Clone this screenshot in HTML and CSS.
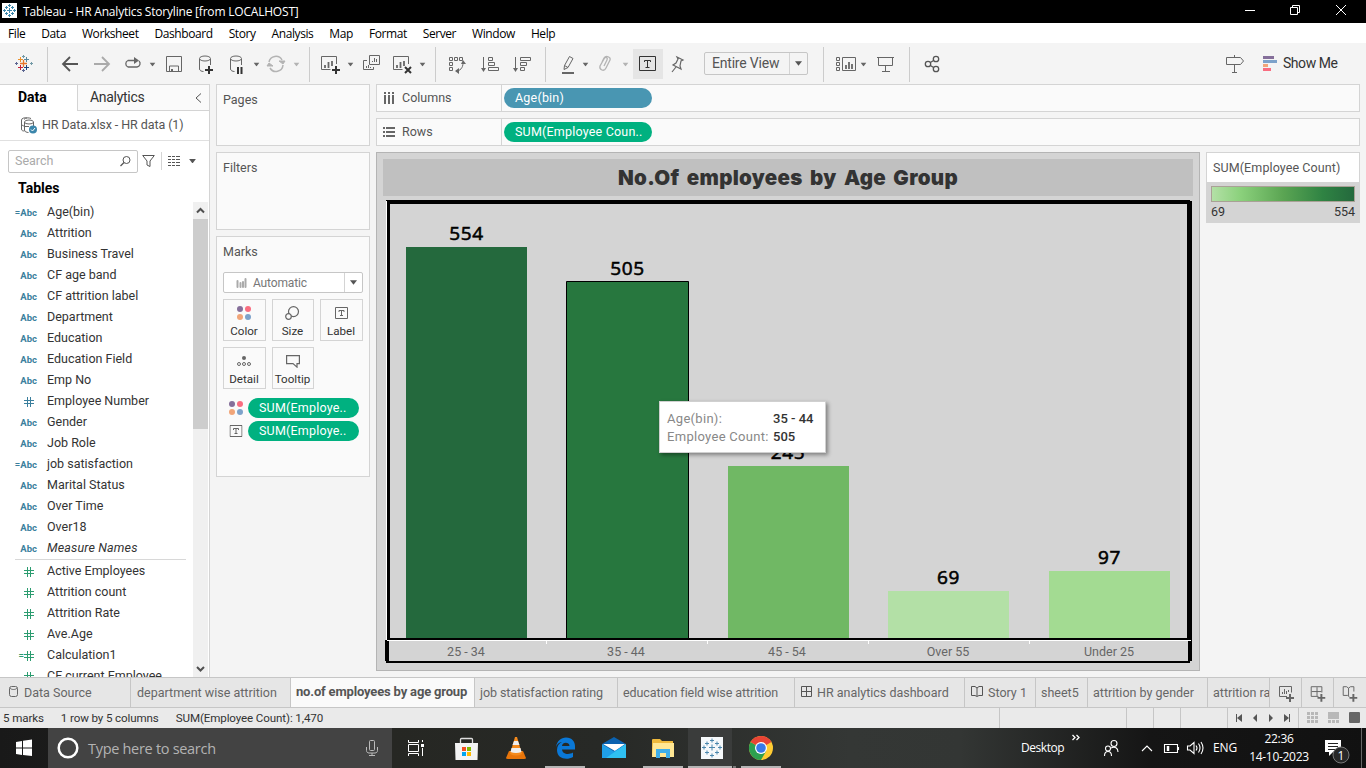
FILE: index.html
```html
<!DOCTYPE html>
<html lang="en">
<head>
<meta charset="utf-8">
<title>Tableau - HR Analytics Storyline</title>
<link rel="stylesheet" href="styles.css">
</head>
<body>
<svg class="defs" width="0" height="0">
  <symbol id="caret" viewBox="0 0 6 4"><path d="M0 0h6L3 4z" fill="currentColor"/></symbol>
  <symbol id="hash" viewBox="0 0 10 10"><path d="M0 3.500h10M0 6.500h10M3.500 0v10M6.500 0v10" stroke="currentColor" fill="none"/></symbol>
  <symbol id="tbox" viewBox="0 0 13 12"><path d="M.5.500h12v11H.5zM4 5V3.500h5V5M6.500 3.500v5M5 8.500h3" stroke="#666" fill="none"/></symbol>
  <symbol id="dots" viewBox="0 0 14 14"><circle cx="3" cy="3" r="3" fill="#856f9a"/><circle cx="11" cy="3" r="3" fill="#f96d80"/><circle cx="3" cy="11" r="3" fill="#f1a579"/><circle cx="11" cy="11" r="3" fill="#7da2ca"/></symbol>
</svg>

<header class="titlebar">
  <svg class="app-icon" width="15" height="15" viewBox="0 0 15 15"><rect width="15" height="15" fill="#fff"/><path d="M5 7.500h5M7.500 5v5M6 2.500h3M7.500 1v3M6 12.500h3M7.500 11v3M1 7.500h3M2.500 6v3M11 7.500h3M12.500 6v3M3 4.500h3M4.500 3v3M9 4.500h3M10.500 3v3M3 10.500h3M4.500 9v3M9 10.500h3M10.500 9v3" stroke="#3b86ab" fill="none"/></svg>
  <span class="title">Tableau - HR Analytics Storyline [from LOCALHOST]</span>
  <svg width="136" height="23" viewBox="1230 0 136 23" fill="none" stroke="#fff"><path d="M1245 10.500h10M1290.500 7.500h7v7h-7zM1292.500 7V5.500h7v7H1298M1336 5l10 10M1346 5l-10 10"/></svg>
</header>
<nav class="menu"><span>File</span><span>Data</span><span>Worksheet</span><span>Dashboard</span><span>Story</span><span>Analysis</span><span>Map</span><span>Format</span><span>Server</span><span>Window</span><span>Help</span></nav>

<div class="toolbar">
  <svg width="48" height="41" viewBox="0 43 48 41" fill="none"><path d="M20 63.500h7M23.500 60v7" stroke="#e8762c" stroke-width="1.300"/><path d="M18 59.500h5M20.500 57v5" stroke="#eb912c"/><path d="M24 59.500h5M26.500 57v5" stroke="#59879b"/><path d="M18 67.500h5M20.500 65v5" stroke="#c72035"/><path d="M24 67.500h5M26.500 65v5" stroke="#1f447e"/><path d="M22 56.500h3M23.500 55v3M30 63.500h3M31.500 62v3" stroke="#7199a6"/><path d="M22 70.500h3M23.500 69v3M15 63.500h3M16.500 62v3" stroke="#5b6591"/><path d="M47.500 47v35" stroke="#ccc"/></svg>
  <svg width="38" height="41" viewBox="48 43 38 41" fill="none" stroke="#555" stroke-width="1.800"><path d="M78 64H63M70 57l-7 7 7 7"/></svg>
  <svg width="32" height="41" viewBox="86 43 32 41" fill="none" stroke="#aaa" stroke-width="1.800"><path d="M94 64h15M102 57l7 7-7 7"/></svg>
  <svg width="42" height="41" viewBox="118 43 42 41"><path d="M131 60.500h-3a3.500 3.500 0 0 0 0 6.500h9a3.500 3.500 0 0 0 2-6M130 60.500h6" fill="none" stroke="#666" stroke-width="1.300"/><path d="M134 57l5 3.500-5 3.500z" fill="#666"/><use href="#caret" x="149.500" y="62.500" width="6" height="4" color="#666"/></svg>
  <svg width="30" height="41" viewBox="160 43 30 41" fill="none" stroke="#666"><path d="M166.500 56.500h15v15h-15zM169.500 71v-5h9v5"/><path d="M172 69v2" stroke-width="2"/></svg>
  <svg width="32" height="41" viewBox="190 43 32 41" fill="none" stroke="#666"><path d="M199.500 59v10c0 1.500 2 2.500 4 2.500M210.500 59v6"/><ellipse cx="205" cy="58.500" rx="5.500" ry="2.500"/><path d="M205 70h8M209 66v8" stroke="#333" stroke-width="2"/></svg>
  <svg width="40" height="41" viewBox="222 43 40 41" fill="none" stroke="#666"><path d="M230.500 59v10c0 1.500 2 2.500 4 2.500M241.500 59v6"/><ellipse cx="236" cy="58.500" rx="5.500" ry="2.500"/><path d="M238 67v7M241.500 67v7" stroke="#333" stroke-width="2"/><use href="#caret" x="253.500" y="62.500" width="6" height="4" color="#666" stroke="none"/></svg>
  <svg width="47" height="41" viewBox="262 43 47 41" fill="none" stroke="#b3b3b3"><path d="M269 62a7 7 0 0 1 13-2M283 65a7 7 0 0 1-13 3" stroke-width="1.500"/><path d="M279 61h6l-2 3zM267 66h6l-4-3z" fill="#b3b3b3"/><use href="#caret" x="293.500" y="62.500" width="6" height="4" color="#b3b3b3" stroke="none"/></svg>
  <svg width="48" height="41" viewBox="309 43 48 41" fill="none" stroke="#666"><path d="M309.500 47v35" stroke="#ccc"/><path d="M336.500 64v-7.500h-15v13h9"/><path d="M325 68v-3M328.500 68v-6M332 66v-5" stroke-width="1.800"/><path d="M332 70h8M336 66v8" stroke="#333" stroke-width="2"/><use href="#caret" x="347.500" y="62.500" width="6" height="4" color="#666" stroke="none"/></svg>
  <svg width="31" height="41" viewBox="357 43 31 41" fill="none" stroke="#666"><path d="M369.500 55.500h10v9h-10zM367 60.500h-3.500v9h10V67M372.500 62v-1M374.500 62v-4M376.500 62v-3M366.500 68v-2M368.500 68v-3M370.500 68v-1"/></svg>
  <svg width="47" height="41" viewBox="388 43 47 41" fill="none" stroke="#666"><path d="M408.500 64v-7.500h-15v13h9"/><path d="M397 68v-3M400.500 68v-6M404 66v-5" stroke-width="1.800"/><path d="M405 67l6 6M411 67l-6 6" stroke="#333" stroke-width="2"/><use href="#caret" x="419.500" y="62.500" width="6" height="4" color="#666" stroke="none"/></svg>
  <svg width="39" height="41" viewBox="435 43 39 41" fill="none" stroke="#666"><path d="M435.500 47v35" stroke="#ccc"/><path d="M449.500 57.500h3v3h-3zM454.500 57.500h3v3h-3zM459.500 57.500h3v3h-3zM449.500 62.500h3v3h-3zM449.500 67.500h3v3h-3zM456 71c4 0 7-3 7-8"/><path d="M461 64l2-4 3 4zM459 68l-4 3 4 3z" fill="#666" stroke="none"/></svg>
  <svg width="34" height="41" viewBox="474 43 34 41" fill="none" stroke="#666"><path d="M483.500 57v13M488.500 57.500h4v3h-4zM488.500 62.500h6v3h-6zM488.500 67.500h10v3h-10z"/><path d="M481 68h5l-2.500 4z" fill="#666" stroke="none"/></svg>
  <svg width="37" height="41" viewBox="508 43 37 41" fill="none" stroke="#666"><path d="M515.500 57v13M520.500 57.500h10v3h-10zM520.500 62.500h6v3h-6zM520.500 67.500h4v3h-4z"/><path d="M513 68h5l-2.500 4z" fill="#666" stroke="none"/></svg>
  <svg width="47" height="41" viewBox="545 43 47 41" fill="none" stroke="#666"><path d="M545.500 47v35" stroke="#ccc"/><path d="M564.500 65.500l5-9 3.500 2-5 9-4 2zM564.500 65.500l3.500 2"/><path d="M562 73h12" stroke-width="2"/><use href="#caret" x="582.500" y="62.500" width="6" height="4" color="#666" stroke="none"/></svg>
  <svg width="41" height="41" viewBox="592 43 41 41" fill="none" stroke="#b3b3b3"><path d="M602 62l2-4c2-3 7-1 6 2l-4 8c-2 4-7 2-6-2l4-7c2-3 4-1 3 1l-3 6" stroke-width="1.300"/><use href="#caret" x="622.500" y="62.500" width="6" height="4" color="#b3b3b3" stroke="none"/></svg>
  <svg width="30" height="41" viewBox="633 43 30 41" fill="none" stroke="#333"><path d="M633 49h30v30h-30z" fill="#e5e5e5" stroke="none"/><path d="M639.500 56.500h16v14h-16zM644.500 62v-1.500h6V62M647.500 60.500v7M645.500 67.500h4"/></svg>
  <svg width="41" height="41" viewBox="663 43 41 41" fill="none" stroke="#666" stroke-width="1.200"><path d="M677 57l6 3-2 1-1 5 1 3-8-4 3-2 2-4zM676 67l-4 5"/></svg>
  <div class="fit"><span>Entire View</span><i><svg width="7" height="5"><use href="#caret" width="7" height="5"/></svg></i></div>
  <svg width="55" height="41" viewBox="815 43 55 41" fill="none" stroke="#666"><path d="M823.500 47v35" stroke="#ccc"/><path d="M836.500 57.500h3v3h-3zM836.500 62.500h3v3h-3zM836.500 67.500h3v3h-3zM842.500 57.500h13v13h-13z"/><path d="M846 69v-4M849 69v-7M852 69v-5" stroke-width="1.800"/><use href="#caret" x="860.500" y="62.500" width="6" height="4" color="#666" stroke="none"/></svg>
  <svg width="39" height="41" viewBox="870 43 39 41" fill="none" stroke="#666"><path d="M877 57.500h17M878.500 57.500v8h14v-8M885.500 66v5M882 71.500h8"/></svg>
  <svg width="50" height="41" viewBox="909 43 50 41" fill="none" stroke="#555" stroke-width="1.300"><path d="M909.500 47v35" stroke="#ccc" stroke-width="1"/><circle cx="928" cy="64" r="2.700"/><circle cx="936" cy="59" r="2.700"/><circle cx="936" cy="69" r="2.700"/><path d="M930.400 62.500l3.200-2M930.400 65.500l3.200 2"/></svg>
  <svg class="push" width="30" height="41" viewBox="1222 43 30 41" fill="none" stroke="#666"><path d="M1226.500 57.500h14l3 3.500-3 3.500h-14zM1234.500 55v2M1234.500 65v7M1232 72.500h5"/></svg>
  <svg width="15" height="41" viewBox="1262 43 15 41"><path d="M1263 56h11v3h-11z" fill="#856f9a"/><path d="M1263 60h14v3h-14z" fill="#7da2ca"/><path d="M1263 64h5v3h-5z" fill="#f1a579"/><path d="M1263 68h8v3h-8z" fill="#f96d80"/></svg>
  <span class="showme">Show Me</span>
</div>

<main class="work">
  <aside class="data">
    <div class="dtabs"><b>Data</b><div>Analytics<svg width="7" height="10" viewBox="0 0 7 10"><path d="M6 .5L1 5l5 4.500" fill="none" stroke="#555"/></svg></div></div>
    <div class="source"><svg width="18" height="17" viewBox="0 0 18 17" fill="none" stroke="#666"><path d="M4 2.500C5 .5 9 .5 11 1.500M1.500 3v9c0 2 2 2 3 2M1.500 3C1.500 1 5 .5 7 1M1.500 7c0 1.500 2 2 3 2M4.500 5v8c0 1.500 2 2.500 4 2.500M13.500 5v4"/><ellipse cx="9" cy="5" rx="4.500" ry="2"/><path d="M5 9.500h4"/><circle cx="13" cy="12.500" r="4" fill="#3b86ab" stroke="none"/><path d="M11 12.500l1.500 1.500 2.500-3" stroke="#fff"/></svg><span>HR Data.xlsx - HR data (1)</span></div>
    <div class="find">
      <div class="searchbox"><span>Search</span><svg width="11" height="11" viewBox="0 0 11 11" fill="none" stroke="#555"><circle cx="6.500" cy="4" r="3.500"/><path d="M4 6.500L.5 10" stroke-width="1.300"/></svg></div>
      <svg width="13" height="12" viewBox="0 0 13 12" fill="none" stroke="#555"><path d="M.7.500h11.600L8 6v5.500L5 10V6z"/></svg>
      <i class="bar"></i>
      <svg width="12" height="10" viewBox="0 0 12 10" stroke="#555"><path d="M0 .5h3M0 3.500h3M0 6.500h3M0 9.500h3M4 .5h3M4 3.500h3M4 6.500h3M4 9.500h3M8 .5h4M8 3.500h4M8 6.500h4M8 9.500h4"/></svg>
      <svg class="fc" width="7" height="4"><use href="#caret" width="7" height="4.500"/></svg>
    </div>
    <h2>Tables</h2>
    <div class="fields">
      <ul>
        <li><em>=Abc</em>Age(bin)</li><li><em>Abc</em>Attrition</li><li><em>Abc</em>Business Travel</li><li><em>Abc</em>CF age band</li><li><em>Abc</em>CF attrition label</li><li><em>Abc</em>Department</li><li><em>Abc</em>Education</li><li><em>Abc</em>Education Field</li><li><em>Abc</em>Emp No</li>
        <li><em><svg width="10" height="10"><use href="#hash"/></svg></em>Employee Number</li>
        <li><em>Abc</em>Gender</li><li><em>Abc</em>Job Role</li><li><em>=Abc</em>job satisfaction</li><li><em>Abc</em>Marital Status</li><li><em>Abc</em>Over Time</li><li><em>Abc</em>Over18</li><li class="ital"><em>Abc</em>Measure Names</li>
        <li class="rule"></li>
        <li class="m"><em><svg width="10" height="10"><use href="#hash"/></svg></em>Active Employees</li>
        <li class="m"><em><svg width="10" height="10"><use href="#hash"/></svg></em>Attrition count</li>
        <li class="m"><em><svg width="10" height="10"><use href="#hash"/></svg></em>Attrition Rate</li>
        <li class="m"><em><svg width="10" height="10"><use href="#hash"/></svg></em>Ave.Age</li>
        <li class="m"><em>=<svg width="10" height="10"><use href="#hash"/></svg></em>Calculation1</li>
        <li class="m"><em><svg width="10" height="10"><use href="#hash"/></svg></em>CF current Employee</li>
      </ul>
      <div class="scroll"><svg width="15" height="17" viewBox="0 0 15 17"><path d="M4 10.500L7.500 7l3.500 3.500" fill="none" stroke="#505050" stroke-width="2"/></svg><i></i><svg class="down" width="15" height="17" viewBox="0 0 15 17"><path d="M4 7l3.500 3.500L11 7" fill="none" stroke="#505050" stroke-width="2"/></svg></div>
    </div>
  </aside>

  <section class="cards">
    <div class="card pages">Pages</div>
    <div class="card filters">Filters</div>
    <div class="card marks">Marks
      <div class="mtype"><svg width="11" height="10" viewBox="0 0 11 10" stroke="#aaa" stroke-width="2" stroke-linecap="round"><path d="M1.500 9V3M4.500 9V5M7 9V4"/><path d="M9.500 9V1"/></svg><span>Automatic</span><i><svg width="7" height="5"><use href="#caret" width="7" height="5"/></svg></i></div>
      <div class="mbtns">
        <div><svg width="14" height="14"><use href="#dots"/></svg>Color</div>
        <div><svg width="15" height="14" viewBox="0 0 15 14" fill="none" stroke="#666" stroke-width="1.200"><circle cx="8.500" cy="5.600" r="5"/><circle cx="3.500" cy="10.500" r="2.800" fill="#fafafa"/></svg>Size</div>
        <div><svg width="13" height="14" viewBox="0 -1 13 14"><use href="#tbox" width="13" height="12"/></svg>Label</div>
        <div><svg width="14" height="14" viewBox="0 0 14 14" fill="none" stroke="#666"><circle cx="7" cy="4" r="2" fill="#666" stroke="none"/><circle cx="2" cy="10" r="1.500"/><circle cx="7" cy="10" r="1.500"/><circle cx="12" cy="10" r="1.500"/></svg>Detail</div>
        <div><svg width="14" height="14" viewBox="0 0 14 14" fill="none" stroke="#666" stroke-width="1.200"><path d="M.6 1.600h12.800v8H11v3.500l-4-3.500H.6z"/></svg>Tooltip</div>
      </div>
      <div class="mpill"><svg width="14" height="14"><use href="#dots"/></svg><span>SUM(Employe..</span></div>
      <div class="mpill"><svg width="13" height="12" viewBox="0 0 13 12"><use href="#tbox" width="13" height="12"/></svg><span>SUM(Employe..</span></div>
    </div>
  </section>

  <section class="view">
    <div class="shelf"><div><svg width="12" height="12" viewBox="0 0 12 12"><path d="M1 0h2v2H1zM5 0h2v2H5zM9 0h2v2H9zM1 3h2v9H1zM5 3h2v9H5zM9 3h2v9H9z" fill="#666"/></svg>Columns</div><span class="pill blue">Age(bin)</span></div>
    <div class="shelf"><div><svg width="12" height="12" viewBox="0 0 12 12"><path d="M0 1h2v2H0zM0 5h2v2H0zM0 9h2v2H0zM3 1h9v2H3zM3 5h9v2H3zM3 9h9v2H3z" fill="#666"/></svg>Rows</div><span class="pill">SUM(Employee Coun..</span></div>
    <div class="canvas">
      <div class="viz">
        <h1>No.Of employees by Age Group</h1>
        <svg class="chart" width="822" height="473" viewBox="377 197 822 473">
          <path d="M386 200h804v1h2v439H386z"/>
          <path d="M386.500 201v439" stroke="#fff"/>
          <path d="M390 204h797v434H390z" fill="#d4d4d4"/>
          <path d="M385 640h807v21h-2v2H386v-2h-1z"/>
          <path d="M389 640h799v21H389z" fill="#d4d4d4"/>
          <path d="M387 640.500h804M546.500 640v4M707.500 640v4M868.500 640v4M1029.500 640v4" stroke="#fff"/>
          <path d="M406 247h121v391H406z" fill="#24693d"/>
          <path d="M566.500 281.500h122v357h-122z" fill="#27773e" stroke="#000"/>
          <path d="M728 466h121v172H728z" fill="#70b864"/>
          <path d="M888 591h121v47H888z" fill="#b3e0a6"/>
          <path d="M1049 571h121v67h-121z" fill="#a3db92"/>
          <g class="vals"><text x="466.500" y="240">554</text><text x="627.500" y="275">505</text><text x="788" y="459">245</text><text x="948.500" y="584">69</text><text x="1109.500" y="564">97</text></g>
          <g class="axis"><text x="466" y="656">25 - 34</text><text x="626" y="656">35 - 44</text><text x="787" y="656">45 - 54</text><text x="948" y="656">Over 55</text><text x="1109" y="656">Under 25</text></g>
        </svg>
        <div class="tip"><span>Age(bin):</span><b>35 - 44</b><span>Employee Count:</span><b>505</b></div>
      </div>
      <div class="legend"><p>SUM(Employee Count)</p><div class="ramp"></div><div class="ends"><span>69</span><span>554</span></div></div>
    </div>
  </section>
</main>

<div class="sheets">
  <div class="s1"><svg width="10" height="12" viewBox="0 0 10 12" fill="none" stroke="#666"><rect x=".5" y=".5" width="8" height="10" rx="2"/><path d="M1 2c1 2 6 2 7 0"/></svg>Data Source</div>
  <div class="s2">department wise attrition</div>
  <div class="s3 on">no.of employees by age group</div>
  <div class="s4">job statisfaction rating</div>
  <div class="s5">education field wise attrition</div>
  <div class="s6"><svg width="11" height="11" viewBox="0 0 11 11"><path d="M.5.500h10v10H.5zM5.500 0v11M0 5.500h11" fill="none" stroke="#555"/></svg>HR analytics dashboard</div>
  <div class="s7"><svg width="12" height="11" viewBox="0 0 12 11"><path d="M.5.500H4L6 2 8 .5h3.500v9H8l-2 1-2-1H.5zM6 2v8" fill="none" stroke="#555"/></svg>Story 1</div>
  <div class="s8">sheet5</div>
  <div class="s9">attrition by gender</div>
  <div class="s10">attrition rate</div>
  <svg width="31" height="30" viewBox="1270 678 31 30" fill="none" stroke="#666"><path d="M1287 696.500h-7.500v-10h12v6M1282.500 694v-2M1284.500 694v-5M1286.500 694v-3M1288.500 692v-2"/><path d="M1286 698h8M1290 694v8" stroke-width="2"/></svg>
  <svg class="nl" width="32" height="30" viewBox="1302 678 32 30" fill="none" stroke="#666"><path d="M1319 696.500h-7.500v-10h11v6M1317.500 687v9M1312 691.500h10"/><path d="M1318 698h8M1322 694v8" stroke-width="2"/></svg>
  <svg class="nl" width="32" height="30" viewBox="1334 678 32 30" fill="none" stroke="#666"><path d="M1350 697l-2-1.500h-4.500v-9h3.500l2 1.500 2-1.500h3.500v5M1349 688v8"/><path d="M1350 698h8M1354 694v8" stroke-width="2"/></svg>
</div>

<div class="status"><span>5 marks</span><span>1 row by 5 columns</span><span>SUM(Employee Count): 1,470</span>
  <svg width="367" height="20" viewBox="999 708 367 20"><path d="M999.500 708v20M1126.500 708v20M1153.500 708v20M1180.500 708v20M1227.500 708v20M1298.500 708v20" stroke="#c6c6c6"/><path d="M1236 714h1v8h-1zM1242 714v8l-5-4zM1257 714v8l-4-4zM1269 714v8l4-4zM1284 714v8l5-4zM1289 714h1v8h-1z" fill="#555"/><path d="M1307 712h3v3h-3zM1311 712h3v3h-3zM1315 712h3v3h-3zM1307 716h3v3h-3zM1311 716h3v3h-3zM1315 716h3v3h-3zM1307 720h3v3h-3zM1311 720h3v3h-3zM1315 720h3v3h-3zM1328 712h11v7h-11zM1328 720h3v3h-3zM1332 720h3v3h-3zM1336 720h3v3h-3z" fill="#b8b8b8"/><rect x="1349" y="712" width="11" height="11" rx="1" fill="#666"/></svg>
</div>

<footer class="taskbar">
  <svg class="start" width="48" height="40" viewBox="0 728 48 40"><path d="M16 742l6-1v6.500h-6zM23 740.800l9-1.300v8h-9zM16 748.500h6v6.500l-6-1zM23 748.500h9v7.500l-9-1z" fill="#fff"/></svg>
  <div class="tsearch"><svg width="22" height="22" viewBox="0 0 22 22"><circle cx="11" cy="11" r="9.300" fill="none" stroke="#fff" stroke-width="2.500"/></svg><span>Type here to search</span><svg width="12" height="17" viewBox="0 0 12 17" fill="none" stroke="#bbb"><rect x="3.500" y=".5" width="5" height="10" rx="1"/><path d="M.5 7v3.500c0 1.500 1 2.500 2.500 2.500h6c1.500 0 2.500-1 2.500-2.500V7M6 13v3M3 15.500h6"/></svg></div>
  <svg width="51" height="40" viewBox="392 728 51 40" fill="none" stroke="#fff"><path d="M408.500 744.500h10v7h-10zM408.500 740v2.500h10V740M408.500 756v-2.500h10v2.500M422.500 740v2M422.500 748v8"/><path d="M421 745.500h3" stroke-width="3"/></svg>
  <svg width="48" height="40" viewBox="443 728 48 40"><path d="M460.500 744v-4.500q0-1 1-1h10q1 0 1 1v4.500" fill="none" stroke="#ddd" stroke-width="1.300"/><path d="M455 743h23l-.5 17h-22z" fill="#f3f3f3"/><path d="M462 747h4v4h-4z" fill="#f25022"/><path d="M467 747h4v4h-4z" fill="#7fba00"/><path d="M462 752h4v4h-4z" fill="#00a4ef"/><path d="M467 752h4v4h-4z" fill="#ffb900"/></svg>
  <svg width="49" height="40" viewBox="491 728 49 40"><path d="M509 751h14l3 7q0 1-2 1h-16q-2 0-2-1z" fill="#e8750a"/><path d="M515 737h2l5 17q-6 3-12 0z" fill="#f58a1c"/><path d="M514 741h4l1.500 4h-7zM511.500 748h9l1 4q-5.500 2-11 0z" fill="#eee"/></svg>
  <svg class="run" width="49" height="40" viewBox="540 728 49 40"><path d="M556 747c1-6 5-9.500 10-9.500 6 0 9 4 9 9v3h-13c.5 5 7 5.500 11 3v4.500c-6 3.500-16 2-16-7 0-4 2-6.500 5-8-3 .5-5 2-6 5zm6-1h7.500c0-4-7-4.500-7.500 0z" fill="#0a78d7" fill-rule="evenodd"/><path d="M545 766h40v2h-40z" fill="#b5b5b5"/></svg>
  <svg width="49" height="40" viewBox="589 728 49 40"><path d="M602 744l12-7 12 7-12 9z" fill="#0b62b0"/><path d="M603 744h22l-10 7z" fill="#fff"/><path d="M602 744l12 7.500 12-7.500v14h-24z" fill="#1f9fe8"/><path d="M626 744v14h-20z" fill="#2fc0f2"/></svg>
  <svg width="50" height="40" viewBox="638 728 50 40"><path d="M652 740q0-1 1-1h7l2 2h11v14h-21z" fill="#eeb93c"/><path d="M653 743h21v14h-22z" fill="#ffe794"/><path d="M656 749h14v9h-4v-5h-6v5h-4z" fill="#3eaeea"/><path d="M643 766h40v2h-40z" fill="#b5b5b5"/></svg>
  <svg width="49" height="40" viewBox="688 728 49 40" fill="none"><path d="M688 728h44v40h-44z" fill="#3a3c3b"/><path d="M701 737h22v22h-22z" fill="#f5f8fa"/><path d="M709 747.500h6M712 744.500v6M710 740.500h4M712 738.500v4M710 755.500h4M712 753.500v4M702 747.500h4M704 745.500v4M718 747.500h4M720 745.500v4M705 743.500h4M707 741.500v4M715 743.500h4M717 741.500v4M705 752.500h4M707 750.500v4M715 752.500h4M717 750.500v4" stroke="#4b87ad"/><path d="M688 766h44v2h-44z" fill="#b5b5b5"/><path d="M733 766h3v2h-3z" fill="#777"/></svg>
  <svg width="49" height="40" viewBox="737 728 49 40"><circle cx="761" cy="748" r="12" fill="#fc3"/><path d="M761 748L750.600 742A12 12 0 0 0 761 760l5.200-9z" fill="#2da04f"/><path d="M761 748l-10.400-6a12 12 0 0 1 20.800 0z" fill="#e94435"/><circle cx="761" cy="748" r="6" fill="#fff"/><circle cx="761" cy="748" r="4.800" fill="#3979e8"/><path d="M741 766h40v2h-40z" fill="#b5b5b5"/></svg>
  <span class="desk">Desktop</span>
  <svg width="146" height="40" viewBox="1066 728 146 40" fill="none" stroke="#fff" stroke-width="1.100"><path d="M1072.500 735l2.500 2.500-2.500 2.500M1076.500 735l2.500 2.500-2.500 2.500" stroke-width="1.300"/><circle cx="1114" cy="743.500" r="3"/><circle cx="1108" cy="748.500" r="2.500"/><path d="M1104.500 756c0-6 7-6 7 0M1111 748c4-2 7 0 7 4M1142 751l5-5 5 5M1164.500 744.500h13v8h-13zM1178.500 747v3"/><path d="M1168 746v5" stroke-width="2.500"/><path d="M1187.500 746h2.500l4-3.500v11l-4-3.500h-2.500zM1196 745.500q2 2.500 0 5M1198.500 743.500q3 4.500 0 9M1201 742q4 6 0 12"/></svg>
  <span class="eng">ENG</span>
  <div class="clock">22:36<br>14-10-2023</div>
  <svg width="57" height="40" viewBox="1309 728 57 40"><path d="M1325 740h16v12h-8l-4 4v-4h-4z" fill="#fff"/><path d="M1328 743.500h10M1328 746.500h10M1328 749.500h7" stroke="#222"/><circle cx="1341" cy="755" r="8" fill="#282828" stroke="#777"/><text x="1341" y="759.500" text-anchor="middle" class="badge">1</text><path d="M1361.500 728v40" stroke="#666"/></svg>
</footer>
</body>
</html>
```
FILE: styles.css
```css
* { box-sizing: border-box; }
body { margin: 0; width: 1366px; height: 768px; overflow: hidden; display: flex; flex-direction: column; background: #f4f4f4; font: 12.5px/16px Roboto, "Liberation Sans", sans-serif; color: #333; white-space: nowrap; letter-spacing: 0; }
svg { display: block; flex: none; }
.defs { position: absolute; }
i, em { font-style: normal; }

.titlebar { height: 23px; flex: none; display: flex; align-items: center; background: #000; color: #fff; font: 12px/23px "Open Sans", sans-serif; letter-spacing: -.2px; padding-left: 2px; }
.app-icon { margin-top: -3px; }
.title { flex: 1; padding-left: 6px; }
.menu { height: 20px; flex: none; background: #fff; color: #000; display: flex; gap: 16px; padding-left: 8px; font: 12px/21px "Open Sans", sans-serif; letter-spacing: -.42px; }
.toolbar { height: 41px; flex: none; display: flex; }
.fit { width: 104px; height: 23px; margin: 9px 7px 0 0; border: 1px solid #c6c6c6; border-radius: 2px; display: flex; color: #555; font-size: 14px; line-height: 21px; letter-spacing: -.2px; }
.fit span { flex: 1; padding-left: 7px; }
.fit i { width: 18px; border-left: 1px solid #d4d4d4; display: grid; place-items: center; color: #555; }
.push { margin-left: auto; margin-right: 10px; }
.showme { font-size: 14px; line-height: 40px; width: 89px; padding-left: 6px; letter-spacing: -.45px; }

.work { height: 593px; flex: none; display: flex; }
.data { width: 210px; background: #fff; border-right: 1px solid #d4d4d4; border-top: 1px solid #d4d4d4; display: flex; flex-direction: column; }
.dtabs { display: flex; height: 26px; flex: none; font-size: 14px; line-height: 25px; letter-spacing: 0; }
.dtabs b { width: 77px; padding-left: 18px; color: #000; }
.dtabs div { flex: 1; border-left: 1px solid #d4d4d4; border-bottom: 1px solid #d4d4d4; background: #fafafa; display: flex; align-items: center; justify-content: space-between; padding: 0 7px 0 12px; letter-spacing: -.3px; }
.source { height: 30px; flex: none; border-bottom: 1px solid #e0e0e0; display: flex; align-items: center; gap: 4px; padding-left: 20px; color: #555; letter-spacing: -.08px; }
.source span { margin-top: -2px; }
.find { height: 40px; flex: none; display: flex; align-items: center; padding-left: 8px; color: #555; }
.searchbox { width: 130px; height: 23px; border: 1px solid #c6c6c6; border-radius: 2px; display: flex; align-items: center; justify-content: space-between; padding: 0 6px; color: #aaa; margin-right: 4px; }
.bar { width: 1px; height: 18px; background: #d4d4d4; margin: 0 6px; }
.fc { margin-left: 9px; }
h2 { margin: 0; height: 21px; padding: 0 18px; font-size: 14px; line-height: 15px; color: #000; letter-spacing: 0; }
.fields { flex: 1; min-height: 0; display: flex; overflow: hidden; }
ul { list-style: none; margin: 0; padding: 0; flex: 1; }
li { height: 21px; line-height: 20px; display: flex; }
li em { width: 37px; margin-right: 10px; color: #3b7f9d; font-size: 9.5px; font-weight: 700; line-height: 22px; display: flex; justify-content: flex-end; align-items: center; letter-spacing: 0; }
li em svg { margin-right: 3px; }
li.ital { font-style: italic; letter-spacing: .15px; }
li.m em { color: #2c9c70; }
li.rule { height: 1px; margin: 0 7px 1px 15px; background: #d8d8d8; }
.scroll { width: 15px; margin-right: 1px; background: #f0f0f0; display: flex; flex-direction: column; }
.scroll i { height: 210px; background: #cdcdcd; }
.down { margin-top: auto; }

.cards { width: 166px; padding-left: 6px; display: flex; flex-direction: column; gap: 6px; }
.card { width: 154px; border: 1px solid #d4d4d4; background: #fafafa; padding: 7px 6px; color: #555; }
.pages { height: 62px; }
.filters { height: 78px; }
.marks { height: 241px; }
.mtype { height: 21px; margin-top: 12px; border: 1px solid #c6c6c6; border-radius: 2px; display: flex; align-items: center; background: #fff; color: #777; padding-left: 12px; font-size: 12px; letter-spacing: -.15px; }
.mtype span { flex: 1; padding-left: 6px; }
.mtype i { width: 18px; height: 19px; border-left: 1px solid #d4d4d4; display: grid; place-items: center; color: #555; }
.mbtns { display: grid; grid-template-columns: 43px 42px 43px; column-gap: 6px; row-gap: 6px; margin-top: 6px; }
.mbtns div { height: 42px; border: 1px solid #d4d4d4; display: flex; flex-direction: column; align-items: center; justify-content: space-between; padding: 6px 1px 1px 0; font-size: 11.6px; color: #333; }
.mpill { display: flex; height: 20px; align-items: center; margin: 9px 0 -6px 6px; }
.mpill svg { width: 14px; margin-right: 5px; }
.mpill span { width: 111px; height: 20px; border-radius: 10px; background: #00b180; color: #fff; padding-left: 11px; line-height: 19px; letter-spacing: .2px; }

.view { width: 984px; display: flex; flex-direction: column; gap: 6px; }
.shelf { height: 28px; flex: none; border: 1px solid #d4d4d4; background: #fafafa; display: flex; align-items: center; }
.shelf div { width: 125px; height: 26px; border-right: 1px solid #d4d4d4; display: flex; align-items: center; gap: 7px; padding-left: 6px; color: #555; }
.pill { margin-left: 2px; width: 148px; height: 20px; border-radius: 10px; background: #00b180; color: #fff; padding-left: 11px; line-height: 20px; letter-spacing: .2px; }
.blue { background: #4996b2; }
.canvas { display: flex; gap: 6px; }
.viz { position: relative; width: 824px; height: 519px; border: 1px solid #b4b4b4; background: #d4d4d4; padding-top: 6px; }
h1 { margin: 0 6px; height: 37px; background: #c0c0c0; text-align: center; font: 900 20.5px/38px Inter, sans-serif; color: #333; letter-spacing: .3px; word-spacing: 3px; }
.vals { font: 500 19px "Open Sans", sans-serif; text-anchor: middle; letter-spacing: .6px; stroke: #000; stroke-width: .6px; }
.axis { text-anchor: middle; fill: #666; }
.chart { margin-top: 1px; }
.tip { position: absolute; left: 282px; top: 248px; width: 167px; height: 52px; border: 1px solid #d0d0d0; background: #fff; box-shadow: 2px 2px 4px rgba(0,0,0,.4); padding: 8px 7px; display: grid; grid-template-columns: 106px 1fr; font-size: 13px; line-height: 18px; color: #888; letter-spacing: .3px; }
.tip b { color: #333; font-weight: 500; letter-spacing: 0; }
.legend { width: 154px; height: 71px; border: 1px solid #d4d4d4; background: #d4d4d4; color: #555; }
.legend p { margin: 0; height: 29px; background: #fff; padding-left: 6px; line-height: 29px; letter-spacing: .1px; }
.ramp { margin: 4px; height: 16px; border: 1px solid #a9a196; background: linear-gradient(90deg, #b3e0a6, #8bd17c 20%, #5ba553 50%, #2f8343 78%, #24693d); }
.ends { display: flex; justify-content: space-between; margin: -2px 4px 0; color: #333; }

.sheets { height: 31px; flex: none; border: solid #c6c6c6; border-width: 1px 0; background: #e6e6e6; display: flex; color: #666; }
.sheets div { border-right: 1px solid #c6c6c6; line-height: 30px; padding-left: 6px; overflow: hidden; display: flex; flex: none; }
.sheets div svg { margin: 8px 5px 0 0; }
.sheets .on { background: #fafafa; font-weight: 700; color: #555; line-height: 28px; font-size: 13px; letter-spacing: -.17px; padding-left: 5px; }
.sheets .s1 { width: 131px; padding-left: 9px; }
.s2 { width: 160px; }
.s3 { width: 184px; }
.sheets .s4 { width: 143px; padding-left: 5px; letter-spacing: -.08px; }
.sheets .s5 { width: 177px; padding-left: 5px; letter-spacing: -.08px; }
.s6 { width: 170px; }
.s7 { width: 71px; }
.sheets .s8 { width: 52px; padding-left: 5px; }
.sheets .s9 { width: 120px; padding-left: 5px; }
.s10 { width: 62px; }
.sheets .s10 { padding: 0; border-left: 5px solid transparent; }
.nl { border-left: 1px solid #c6c6c6; }
.status { height: 20px; flex: none; background: #eaeaea; display: flex; gap: 17px; padding-left: 3px; font-size: 11.6px; line-height: 20px; letter-spacing: -.12px; }
.status svg { margin-left: auto; }

.taskbar { height: 40px; flex: none; display: flex; background: linear-gradient(90deg, #191919 0, #262723 392px, #272926 600px, #343735 850px, #333634 960px, #151515 1150px, #111 1366px); color: #fff; font: 12px/16px "Open Sans", sans-serif; letter-spacing: -.1px; }
.tsearch { width: 344px; background: #434343; display: flex; align-items: center; padding: 0 14px 0 9px; color: #b3b3b3; font-size: 14.5px; letter-spacing: -.3px; }
.tsearch span { flex: 1; padding-left: 9px; margin-top: 1px; }
.desk { margin-left: auto; width: 45px; line-height: 39px; letter-spacing: -.45px; }
.eng { line-height: 39px; width: 37px; padding-left: 1px; }
.clock { width: 60px; text-align: center; line-height: 18px; padding-top: 2px; letter-spacing: -.3px; }
.badge { fill: #fff; font: 12px "Open Sans", sans-serif; }
```
